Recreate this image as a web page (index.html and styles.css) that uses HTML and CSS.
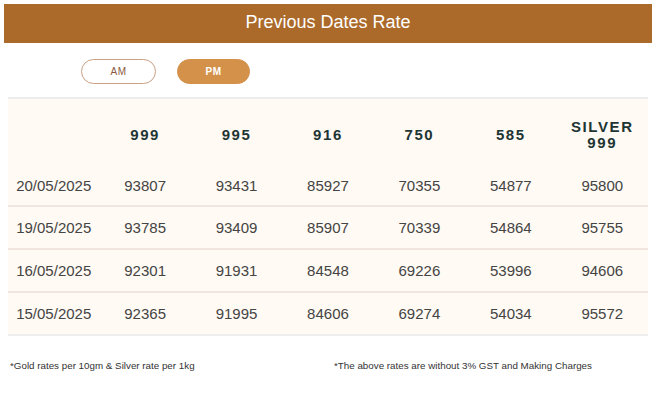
FILE: index.html
```html
<!DOCTYPE html>
<html>
<head>
<meta charset="utf-8">
<link rel="stylesheet" href="styles.css">
</head>
<body>
<div class="title-bar">Previous Dates Rate</div>
<div class="toggle-row">
  <button class="toggle">AM</button>
  <button class="toggle active">PM</button>
</div>
<div class="table-wrap">
  <table class="rates">
    <thead>
      <tr>
        <th></th>
        <th>999</th>
        <th>995</th>
        <th>916</th>
        <th>750</th>
        <th>585</th>
        <th class="silver">SILVER<br>999</th>
      </tr>
    </thead>
    <tbody>
      <tr><td>20/05/2025</td><td>93807</td><td>93431</td><td>85927</td><td>70355</td><td>54877</td><td>95800</td></tr>
      <tr><td>19/05/2025</td><td>93785</td><td>93409</td><td>85907</td><td>70339</td><td>54864</td><td>95755</td></tr>
      <tr><td>16/05/2025</td><td>92301</td><td>91931</td><td>84548</td><td>69226</td><td>53996</td><td>94606</td></tr>
      <tr><td>15/05/2025</td><td>92365</td><td>91995</td><td>84606</td><td>69274</td><td>54034</td><td>95572</td></tr>
    </tbody>
  </table>
</div>
<div class="notes">
  <span>*Gold rates per 10gm &amp; Silver rate per 1kg</span>
  <span>*The above rates are without 3% GST and Making Charges</span>
</div>
</body>
</html>
```

FILE: styles.css
```css
html, body {
  margin: 0;
  padding: 0;
  background: #ffffff;
  font-family: "Liberation Sans", Arial, sans-serif;
}

.title-bar {
  margin: 4px 5px 0 4px;
  height: 39px;
  background: #ab6a2a;
  color: #ffffff;
  font-size: 18px;
  display: flex;
  align-items: center;
  justify-content: center;
  padding-bottom: 2px;
  box-sizing: border-box;
}

.toggle-row {
  display: flex;
  gap: 21px;
  padding-left: 81px;
  margin-top: 16px;
}

.toggle {
  width: 75px;
  height: 25px;
  border-radius: 13px;
  border: 1px solid #c9a084;
  background: #ffffff;
  color: #8a5a3e;
  font-family: "Liberation Sans", Arial, sans-serif;
  font-size: 10px;
  letter-spacing: 0.5px;
  padding: 0;
}

.toggle.active {
  width: 73px;
  background: #d4914a;
  border-color: #d4914a;
  color: #ffffff;
  font-weight: bold;
}

.table-wrap {
  margin: 13px 9px 0 8px;
  border-top: 2px solid #ececec;
  border-bottom: 2px solid #efefef;
}

.rates {
  width: 640px;
  border-collapse: collapse;
  table-layout: fixed;
  background: #fffaf3;
}

.rates th {
  height: 63px;
  font-size: 15px;
  font-weight: bold;
  color: #1e3533;
  letter-spacing: 1.6px;
  text-align: center;
  vertical-align: middle;
  padding: 4px 0 0;
  line-height: 16px;
}

.rates td {
  height: 41px;
  font-size: 15px;
  color: #444444;
  text-align: center;
  vertical-align: middle;
  padding: 0;
}

.rates tbody tr {
  border-bottom: 2px solid #f1e6df;
}

.rates tbody tr:last-child {
  border-bottom: none;
}

.rates tbody tr:first-child td {
  height: 39px;
}

.notes {
  display: grid;
  grid-template-columns: 324px 1fr;
  padding-left: 10px;
  margin-top: 24px;
  font-size: 9.8px;
  color: #333333;
}
```
